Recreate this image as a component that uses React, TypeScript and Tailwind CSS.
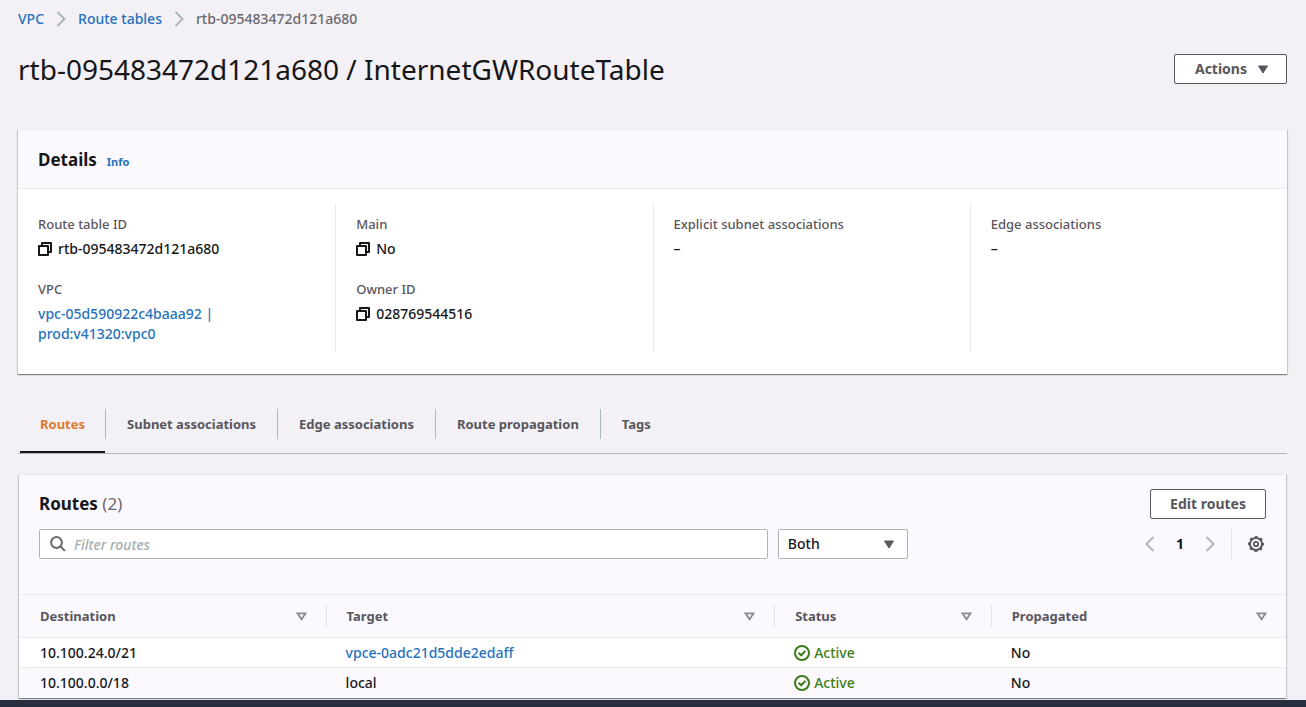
import { useState } from "react"

const tabs = ["Routes", "Subnet associations", "Edge associations", "Route propagation", "Tags"]

const routes = [
  { destination: "10.100.24.0/21", target: "vpce-0adc21d5dde2edaff", link: true, propagated: "No" },
  { destination: "10.100.0.0/18", target: "local", link: false, propagated: "No" },
]

const columns = [
  { name: "Destination", width: "w-[24.2%]" },
  { name: "Target", width: "w-[35.4%]" },
  { name: "Status", width: "w-[17.1%]" },
  { name: "Propagated", width: "w-[23.3%]" },
]

const cardClass =
  "border-t border-[#eaeaec] shadow-[0_1px_1px_0_rgba(0,28,36,0.3),1px_1px_1px_0_rgba(0,28,36,0.15),-1px_1px_1px_0_rgba(0,28,36,0.15)]"

function Chevron({ left, className }: { left?: boolean; className?: string }) {
  return (
    <svg width="10" height="16" viewBox="0 0 10 16" fill="none" stroke="#aab7b8" strokeWidth="2" className={className} aria-hidden="true">
      <path d={left ? "M8.5 1 1.5 8l7 7" : "M1.5 1l7 7-7 7"} />
    </svg>
  )
}

function Caret() {
  return (
    <svg width="12" height="9" viewBox="0 0 12 9" aria-hidden="true">
      <path d="M1.5 1h9L6 8z" fill="#59565d" stroke="#59565d" strokeLinejoin="round" />
    </svg>
  )
}

function SortIcon() {
  return (
    <svg width="11" height="9" viewBox="0 0 11 9" aria-hidden="true">
      <path d="M1.5 1.3h8L5.5 7.3z" fill="none" stroke="#8c8c94" strokeWidth="1.8" />
    </svg>
  )
}

function CopyIcon() {
  return (
    <svg width="14" height="14" viewBox="0 0 14 14" fill="none" stroke="#16161a" strokeWidth="2" strokeLinejoin="round" aria-hidden="true">
      <path d="M1 4h9v9H1z" />
      <path d="M4 4V1h9v9h-3" />
    </svg>
  )
}

function CheckIcon() {
  return (
    <svg width="16" height="16" viewBox="0 0 16 16" fill="none" stroke="#3b7d16" strokeWidth="2" aria-hidden="true">
      <circle cx="8" cy="8" r="7" />
      <path d="M4.6 7.8l2.6 2.5 4.2-4.4" />
    </svg>
  )
}

function GearIcon() {
  return (
    <svg width="16" height="16" viewBox="0 0 16 16" fill="none" stroke="#59565d" aria-hidden="true">
      <circle cx="8" cy="8" r="6" strokeWidth="2" />
      <circle cx="8" cy="8" r="7.2" strokeWidth="1.6" strokeDasharray="2.83 2.83" strokeDashoffset="1.41" />
      <circle cx="8" cy="8" r="2.2" strokeWidth="1.8" />
    </svg>
  )
}

function Detail({ label, value, copy }: { label: string; value: string; copy?: boolean }) {
  return (
    <div>
      <dt className="text-[13px] text-[#59565d]">{label}</dt>
      <dd className="mt-[5px] flex items-center gap-[6px]">
        {copy && (
          <button type="button" aria-label={"Copy " + label}>
            <CopyIcon />
          </button>
        )}
        {value}
      </dd>
    </div>
  )
}

export default function App() {
  const [tab, setTab] = useState("Routes")
  const [filter, setFilter] = useState("")

  return (
    <div className="bg-[#f3f1f5] font-['Noto_Sans',sans-serif] text-sm leading-5 font-medium text-[#16161a]">
      <main className="pt-[9px] pr-[19px] pb-[2px] pl-[18px]">
        <nav className="flex items-center gap-3" aria-label="Breadcrumb">
          <a href="#" className="text-[#2672bd]">VPC</a>
          <Chevron />
          <a href="#" className="text-[#2672bd]">Route tables</a>
          <Chevron />
          <span className="text-[#6b6870]">rtb-095483472d121a680</span>
        </nav>

        <header className="mt-[22px] flex items-center justify-between">
          <h1 className="text-[28px] leading-9 font-normal">rtb-095483472d121a680 / InternetGWRouteTable</h1>
          <button
            type="button"
            className="flex h-[30px] items-center gap-[10px] rounded-xs border border-[#59565d] bg-white pr-[17px] pl-5 font-bold text-[#59565d]">
            Actions
            <Caret />
          </button>
        </header>

        <section className={"mt-[42px] bg-white " + cardClass}>
          <div className="flex items-baseline gap-[10px] border-b border-[#eaeaec] bg-[#fbf9fd] px-5 pt-[18px] pb-4">
            <h2 className="text-[17px] leading-6 font-bold">Details</h2>
            <a href="#" className="text-[11px] font-bold text-[#2672bd]">Info</a>
          </div>
          <dl className="grid grid-cols-4 pt-[15px] pb-[22px]">
            <div className="space-y-5 px-5 pt-[10px] pb-2">
              <Detail label="Route table ID" value="rtb-095483472d121a680" copy />
              <div>
                <dt className="text-[13px] text-[#59565d]">VPC</dt>
                <dd className="mt-[5px]">
                  <a href="#" className="text-[#2672bd]">
                    vpc-05d590922c4baaa92 |<br />
                    prod:v41320:vpc0
                  </a>
                </dd>
              </div>
            </div>
            <div className="space-y-5 border-l border-[#eaeaec] px-5 pt-[10px] pb-2">
              <Detail label="Main" value="No" copy />
              <Detail label="Owner ID" value="028769544516" copy />
            </div>
            <div className="border-l border-[#eaeaec] px-5 pt-[10px] pb-2">
              <Detail label="Explicit subnet associations" value="–" />
            </div>
            <div className="border-l border-[#eaeaec] px-5 pt-[10px] pb-2">
              <Detail label="Edge associations" value="–" />
            </div>
          </dl>
        </section>

        <div role="tablist" className="mt-[35px] flex border-b border-[#aab7b8] pl-[2px]">
          {tabs.map((name, i) => (
            <button
              key={name}
              type="button"
              role="tab"
              aria-selected={tab === name}
              onClick={() => setTab(name)}
              className={
                "flex flex-col text-[13px] font-bold " + (tab === name ? "text-[#dd7a30]" : "text-[#59565d]")
              }>
              <span
                className={
                  "py-[5px] " +
                  (i > 0 ? "px-[21px] " : "px-5 ") +
                  (i < tabs.length - 1 ? "border-r border-[#aab7b8]" : "")
                }>
                {name}
              </span>
              <span className={"mt-3 mr-px h-[2px] self-stretch " + (tab === name ? "bg-[#16161a]" : "")} />
            </button>
          ))}
        </div>

        <section className={"mx-px mt-5 bg-[#fbf9fd] " + cardClass}>
          <div className="px-5 pt-[14px] pb-[35px]">
            <div className="flex items-center justify-between">
              <h2 className="text-[17px] leading-6 font-bold">
                Routes <span className="font-normal text-[#6b6870]">(2)</span>
              </h2>
              <button
                type="button"
                className="h-[30px] rounded-xs border border-[#59565d] bg-white px-[19px] font-bold text-[#59565d]">
                Edit routes
              </button>
            </div>

            <div className="mt-[10px] flex items-center">
              <label className="flex h-[30px] w-[59.4%] items-center rounded-xs border border-[#aab7b8] bg-white pl-[10px]">
                <svg width="16" height="16" viewBox="0 0 16 16" fill="none" stroke="#6b6870" strokeWidth="2" aria-hidden="true">
                  <circle cx="6.5" cy="6.5" r="5.4" />
                  <path d="M10.3 10.3l4.6 4.6" />
                </svg>
                <input
                  type="text"
                  aria-label="Filter routes"
                  placeholder="Filter routes"
                  value={filter}
                  onChange={(e) => setFilter(e.target.value)}
                  className="h-full flex-1 px-2 placeholder:text-[#a5aeb1] placeholder:italic focus:outline-none"
                />
              </label>
              <div className="relative ml-[10px] w-[130px]">
                <select
                  aria-label="Route filter"
                  className="h-[30px] w-full appearance-none rounded-xs border border-[#aab7b8] bg-white px-[9px]">
                  <option>Both</option>
                </select>
                <span className="pointer-events-none absolute inset-y-0 right-[13px] flex items-center">
                  <Caret />
                </span>
              </div>
              <div className="ml-auto flex items-center">
                <button type="button" aria-label="Previous page">
                  <Chevron left />
                </button>
                <span className="w-[50px] text-center font-bold">1</span>
                <button type="button" aria-label="Next page">
                  <Chevron />
                </button>
                <span className="mx-4 h-[30px] w-px bg-[#e4e4e8]" />
                <button type="button" aria-label="Preferences" className="mr-[2px]">
                  <GearIcon />
                </button>
              </div>
            </div>
          </div>

          <table className="w-full table-fixed border-t border-[#eaeaec] text-left">
            <thead>
              <tr className="border-b border-[#eaeaec]">
                {columns.map((col, i) => (
                  <th key={col.name} scope="col" className={"h-[43px] p-0 " + col.width}>
                    <div
                      className={
                        "flex h-[22px] items-center justify-between pr-[19px] text-[13px] text-[#59565d] " +
                        (i > 0 ? "border-l border-[#e4e4e8] pl-5" : "pl-[21px]")
                      }>
                      {col.name}
                      <SortIcon />
                    </div>
                  </th>
                ))}
              </tr>
            </thead>
            <tbody>
              {routes.map((route) => (
                <tr key={route.destination} className="border-b border-[#eaeaec] odd:bg-white last:border-b-0">
                  <td className="h-[30px] pl-[21px]">{route.destination}</td>
                  <td className="px-5">
                    {route.link ? (
                      <a href="#" className="text-[#2672bd]">{route.target}</a>
                    ) : (
                      route.target
                    )}
                  </td>
                  <td className="px-5 text-[#3b7d16]">
                    <span className="flex items-center gap-1">
                      <CheckIcon />
                      Active
                    </span>
                  </td>
                  <td className="px-5">{route.propagated}</td>
                </tr>
              ))}
            </tbody>
          </table>
        </section>
      </main>
      <footer className="h-[7px] bg-[#282e40]" />
    </div>
  )
}
